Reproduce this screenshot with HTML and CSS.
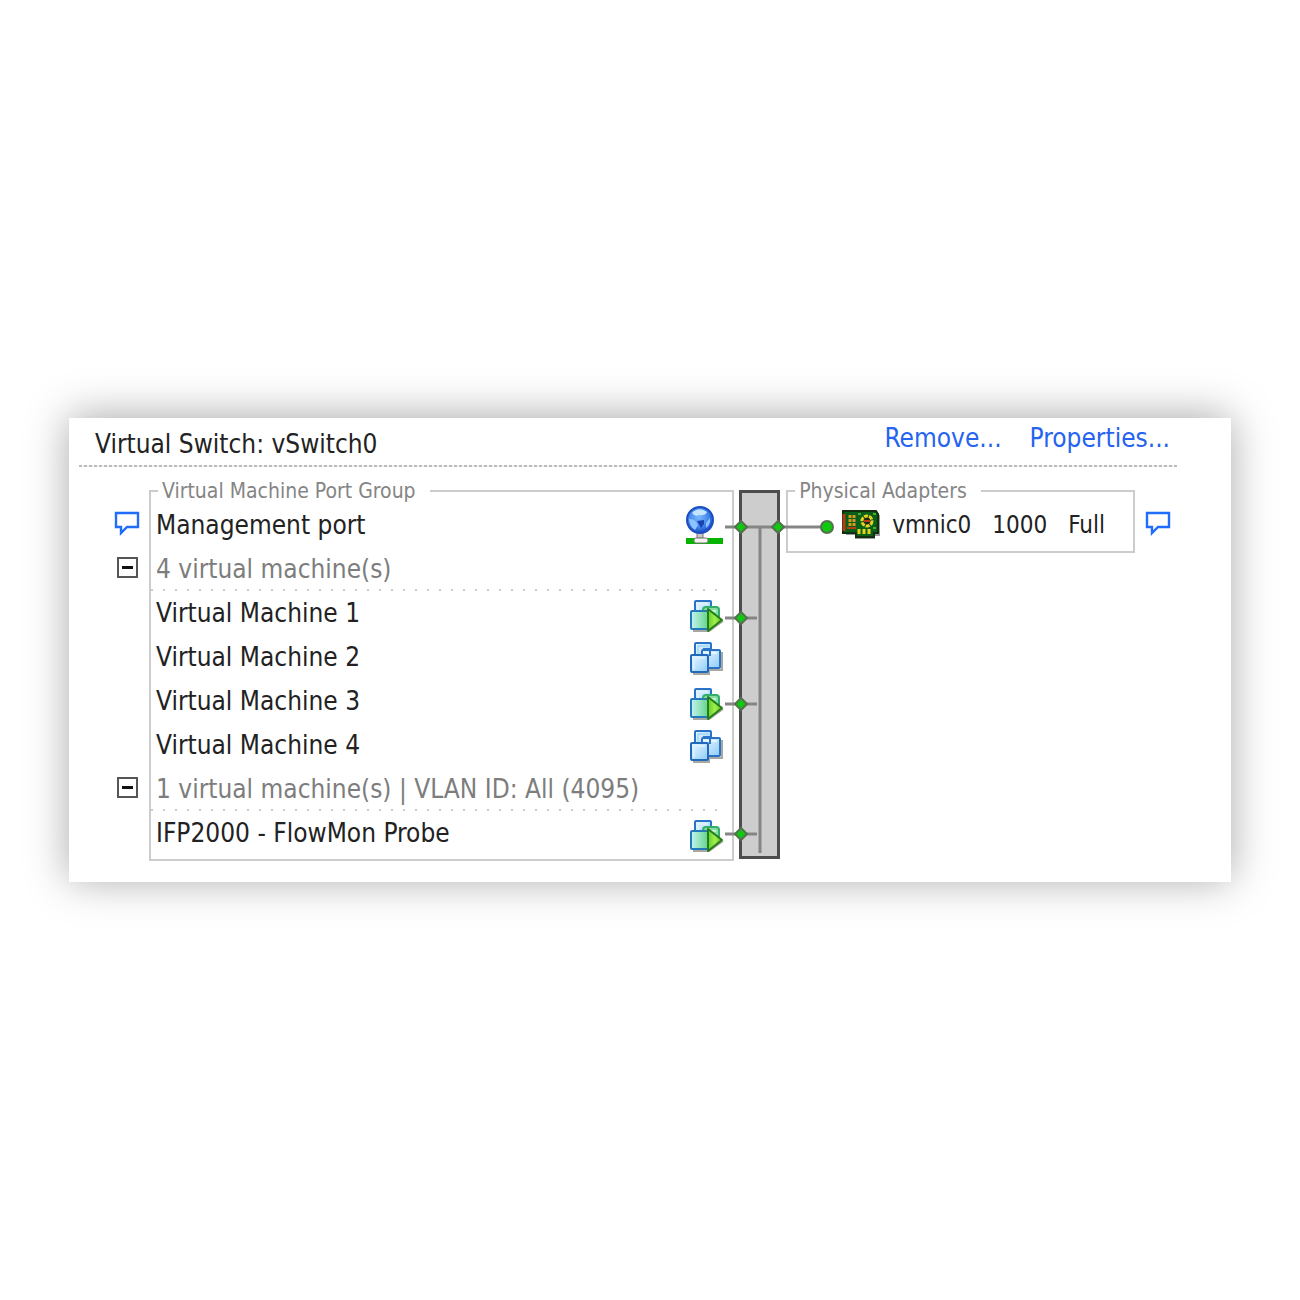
FILE: index.html
```html
<!DOCTYPE html>
<html lang="en">
  <head>
    <meta charset="utf-8">
    <title>Virtual Switch: vSwitch0</title>
    <link rel="stylesheet" href="styles.css">
  </head>
  <body>
    <svg class="defs" aria-hidden="true">
      <defs>
        <linearGradient id="blue" x1="0" y1="0" x2="1" y2="1">
          <stop offset="0" stop-color="#eefaff"/>
          <stop offset="1" stop-color="#8ccbfa"/>
        </linearGradient>
        <linearGradient id="teal" x1="0" y1="0" x2="1" y2="0">
          <stop offset="0" stop-color="#c4f2f4"/>
          <stop offset="1" stop-color="#5fd384"/>
        </linearGradient>
        <linearGradient id="play" x1="0" y1="0" x2="1" y2="0">
          <stop offset="0" stop-color="#5fd02c"/>
          <stop offset="0.5" stop-color="#a4ee4c"/>
          <stop offset="1" stop-color="#5cc024"/>
        </linearGradient>
        <radialGradient id="ball" cx="0.45" cy="0.4" r="0.6">
          <stop offset="0" stop-color="#7db8fb"/>
          <stop offset="0.6" stop-color="#4388ee"/>
          <stop offset="1" stop-color="#1a48c0"/>
        </radialGradient>
      </defs>
      <symbol id="comment" viewBox="0 0 26 26">
        <path d="M2 3H24V17H13L7 23V17H2Z" fill="#fff" stroke="#1f6dfa" stroke-width="2.4"/>
      </symbol>
      <symbol id="vm-off" viewBox="0 0 36 40">
        <path d="M5 37H21V33H34V15" fill="none" stroke="#a8a8a0" stroke-width="2"/>
        <rect x="7" y="6" width="16" height="18" rx="1" fill="url(#blue)" stroke="#2a72c8" stroke-width="2"/>
        <path d="M10 21V9H20" fill="none" stroke="#a9dcfc" stroke-width="2"/>
        <rect x="14" y="13" width="18" height="18" rx="1" fill="url(#blue)" stroke="#2a72c8" stroke-width="2"/>
        <path d="M17 28V16H29" fill="none" stroke="#e4f6ff" stroke-width="2"/>
        <path d="M15 12H22V19" fill="none" stroke="#2a72c8" stroke-width="2"/>
        <rect x="3" y="18" width="17" height="17" rx="1" fill="url(#blue)" stroke="#2069bd" stroke-width="2"/>
        <path d="M6 32V21H17" fill="none" stroke="#d8f0ff" stroke-width="2"/>
      </symbol>
      <symbol id="vm-on" viewBox="0 0 36 40">
        <path d="M5 38H21L35 28" fill="none" stroke="#a8a8a0" stroke-width="2"/>
        <rect x="7" y="8" width="16" height="18" rx="1" fill="url(#blue)" stroke="#2a72c8" stroke-width="2"/>
        <path d="M10 18V11H20" fill="none" stroke="#d8f0ff" stroke-width="2"/>
        <rect x="15" y="14" width="16" height="14" rx="3" fill="#86dfa0" stroke="#35ad6c" stroke-width="2"/>
        <path d="M18 18H28" stroke="#c4f4cf" stroke-width="2"/>
        <rect x="3" y="18" width="18" height="18" rx="1" fill="url(#teal)" stroke="#2478bd" stroke-width="2"/>
        <path d="M20 16L34 27L20 38Z" fill="url(#play)" stroke="#247c1c" stroke-width="2" stroke-linejoin="round"/>
      </symbol>
      <symbol id="globe" viewBox="0 0 38 40">
        <path d="M0 33H37V39H0Z" fill="#08b400"/>
        <path d="M11 28H17V33H11Z" fill="#c9c9c9" stroke="#777"/>
        <rect x="8" y="33" width="14" height="5" rx="2" fill="#f7f2f2" stroke="#777"/>
        <circle cx="14" cy="15" r="13" fill="url(#ball)" stroke="#1c4dc2" stroke-width="2"/>
        <path d="M6 8Q13 1 21 7Q19 11 13 10Q9 12 6 8Z" fill="#c4e5ff"/>
        <path d="M3 14Q9 13 12 20L9 25Q3 21 3 14M24 13L20 18L20 23Q25 19 24 13" fill="#8cc2ff"/>
        <path d="M11 16L18 15L18 19L15 23Z" fill="#1744b3"/>
      </symbol>
      <symbol id="nic" viewBox="0 0 38 30">
        <path d="M4 24H14V28H32V25H38V5" fill="none" stroke="#999" stroke-width="2"/>
        <path d="M1 1H34L36 4V23H32V27H14V23H1Z" fill="#086018" stroke="#123010" stroke-width="2"/>
        <path d="M2 4V21" stroke="#b73b16" stroke-width="3"/>
        <path d="M8 5V17M12 5V17" stroke="#d99a22" stroke-width="3" stroke-dasharray="3 1"/>
        <path d="M5 18H14" stroke="#b73b16" stroke-width="2"/>
        <circle cx="25" cy="11" r="5" fill="#192a10" stroke="#e5d321" stroke-width="3" stroke-dasharray="4 1"/>
        <path d="M22 11H28" stroke="#b73b16" stroke-width="2"/>
        <path d="M17 19V24M22 19V24M27 19V24" stroke="#e5d321" stroke-width="3"/>
        <path d="M16 4H19M31 4H34M31 18H34" stroke="#57a82b" stroke-width="2"/>
      </symbol>
    </svg>

    <main class="card">
      <header class="header">
        <h1 class="title">Virtual Switch: vSwitch0</h1>
        <nav class="links">
          <a href="#remove">Remove...</a>
          <a href="#properties">Properties...</a>
        </nav>
      </header>

      <div class="diagram">
        <div class="gutter">
          <button class="mark" aria-label="Management port notes"><svg class="comment"><use href="#comment"/></svg></button>
          <button class="mark" aria-label="Collapse group"><span class="toggle"></span></button>
          <span class="blank"></span>
          <button class="mark" aria-label="Collapse VLAN group"><span class="toggle"></span></button>
        </div>

        <fieldset class="box ports">
          <legend>Virtual Machine Port Group</legend>
          <div class="row">Management port<svg class="globe"><use href="#globe"/></svg></div>
          <div class="row group">4 virtual machine(s)</div>
          <div class="row">Virtual Machine 1<svg class="vm"><use href="#vm-on"/></svg></div>
          <div class="row">Virtual Machine 2<svg class="vm"><use href="#vm-off"/></svg></div>
          <div class="row">Virtual Machine 3<svg class="vm"><use href="#vm-on"/></svg></div>
          <div class="row">Virtual Machine 4<svg class="vm"><use href="#vm-off"/></svg></div>
          <div class="row group">1 virtual machine(s) | VLAN ID: All (4095)</div>
          <div class="row">IFP2000 - FlowMon Probe<svg class="vm"><use href="#vm-on"/></svg></div>
        </fieldset>

        <!-- switch bar with its uplink and port wires -->
        <svg class="switch" viewBox="0 0 42 370">
          <rect x="1.5" y="1.5" width="38" height="366" fill="#cdcdcd" stroke="#4d4d4d" stroke-width="3"/>
          <g fill="none" stroke="#858585" stroke-width="3">
            <path d="M-14 37H88M21 37V363"/>
            <path d="M-14 128H18M-14 214H18M-14 344H18"/>
          </g>
          <g fill="#0fc80f" stroke="#55704f" stroke-width="2">
            <path d="M2 31L8 37L2 43L-4 37Z"/>
            <path d="M39 31L45 37L39 43L33 37Z"/>
            <path d="M2 122L8 128L2 134L-4 128Z"/>
            <path d="M2 208L8 214L2 220L-4 214Z"/>
            <path d="M2 338L8 344L2 350L-4 344Z"/>
            <circle cx="88" cy="37" r="6"/>
          </g>
        </svg>

        <fieldset class="box adapters">
          <legend>Physical Adapters</legend>
          <div class="row">
            <svg class="nic"><use href="#nic"/></svg>
            <span>vmnic0</span>
            <span>1000</span>
            <span>Full</span>
          </div>
        </fieldset>

        <div class="gutter">
          <button class="mark" aria-label="Adapter notes"><svg class="comment"><use href="#comment"/></svg></button>
        </div>
      </div>
    </main>
  </body>
</html>
```
FILE: styles.css
```css
* {
  box-sizing: border-box;
}
body {
  margin: 0;
  min-height: 100vh;
  display: flex;
  align-items: center;
  background: #fff;
  color: #222;
  font-family: "DejaVu Sans Condensed", "Noto Sans", sans-serif;
  font-size: 26px;
  line-height: 30px;
}
.defs {
  position: absolute;
  width: 0;
  height: 0;
}
.card {
  flex: 1;
  margin: 0 69px;
  padding-bottom: 21px;
  background: #fff;
  box-shadow: 0 -2px 40px rgba(0, 0, 0, 0.34);
}
.header {
  display: flex;
  justify-content: space-between;
  align-items: flex-start;
  margin: 0 54px 12px 10px;
  padding: 5px 7px 8px 16px;
  background: repeating-linear-gradient(90deg, #bbb 0 3px, #f2f2f2 3px 5px) 0 100% / 100% 2px no-repeat;
}
.title {
  margin: 6px 0 0;
  font-size: 26px;
  font-weight: normal;
}
.links {
  display: flex;
  gap: 28px;
}
.links a {
  color: #2563f0;
  text-decoration: none;
}
.diagram {
  display: flex;
  align-items: flex-start;
  padding: 0 60px 0 45px;
}
.gutter {
  display: flex;
  flex-direction: column;
  padding-top: 22px;
}
.mark {
  display: flex;
  align-items: center;
  justify-content: center;
  width: 26px;
  height: 44px;
  padding: 0;
  border: 0;
  background: none;
  cursor: pointer;
}
.blank {
  height: 176px;
}
.comment {
  width: 26px;
  height: 26px;
}
.toggle {
  width: 21px;
  height: 21px;
  border: 2px solid #555;
  background: linear-gradient(#111, #111) center / 11px 3px no-repeat;
}
.box {
  min-width: 0;
  margin: 0;
  padding: 0 0 4px;
  border: 2px solid #ccc;
}
.box legend {
  margin-left: 7px;
  padding: 0 14px 0 4px;
  color: #858585;
  font-size: 21px;
  line-height: 24px;
}
.ports {
  flex: 1;
  margin-left: 9px;
}
.row {
  display: flex;
  align-items: center;
  height: 44px;
  padding: 0 8px 0 5px;
}
.row .globe,
.row .vm {
  margin-left: auto;
}
.group {
  color: #7d7d7d;
  background: repeating-linear-gradient(90deg, #ccc 0 2px, transparent 2px 12px) 0 100% / calc(100% - 8px) 2px no-repeat;
}
.globe {
  width: 38px;
  height: 40px;
}
.vm {
  width: 36px;
  height: 40px;
}
.switch {
  position: relative;
  width: 42px;
  height: 370px;
  margin: 11px 5px 0;
  overflow: visible;
}
.adapters .row {
  gap: 21px;
  padding: 0 28px 0 54px;
  font-size: 24px;
}
.nic {
  width: 38px;
  height: 30px;
  margin-right: -9px;
}
.adapters + .gutter {
  margin-left: 10px;
}
```
